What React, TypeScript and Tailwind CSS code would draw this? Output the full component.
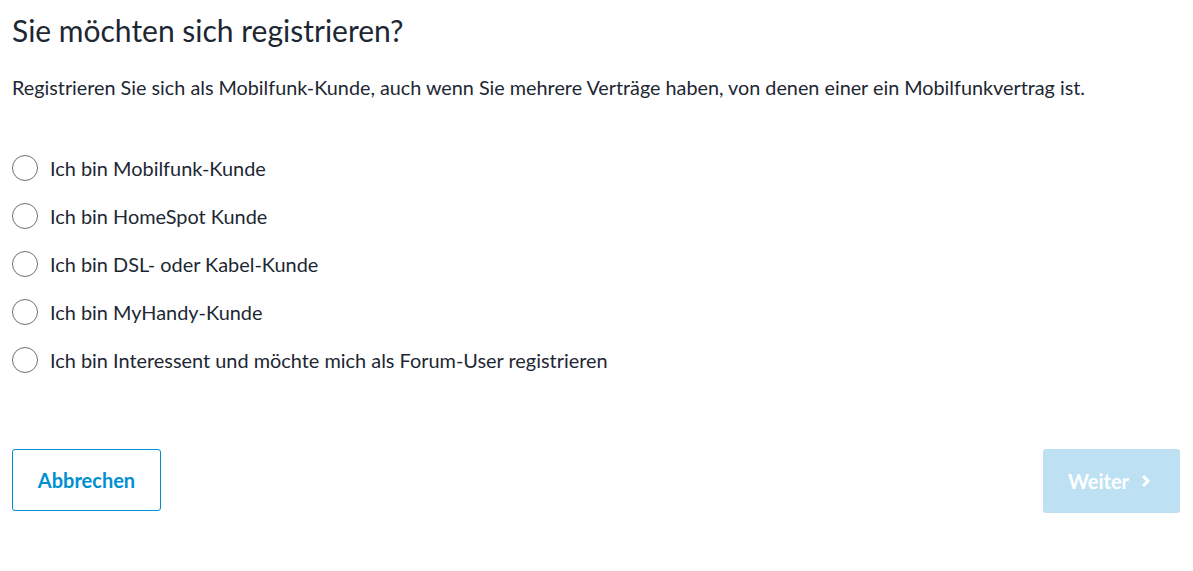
export default function App() {
  const options = [
    "Ich bin Mobilfunk-Kunde",
    "Ich bin HomeSpot Kunde",
    "Ich bin DSL- oder Kabel-Kunde",
    "Ich bin MyHandy-Kunde",
    "Ich bin Interessent und möchte mich als Forum-User registrieren",
  ];
  return (
    <div className="w-[1193px] h-[571px] bg-white text-[#1d2733] px-3 font-['Lato',sans-serif]">
      <h1 className="pt-[12px] text-[30px] leading-[36px]">Sie möchten sich registrieren?</h1>
      <p className="mt-[26px] text-[19.8px] leading-[26px]">
        Registrieren Sie sich als Mobilfunk-Kunde, auch wenn Sie mehrere Verträge haben, von denen einer ein Mobilfunkvertrag ist.
      </p>
      <div className="mt-[55px] flex flex-col gap-[22px]">
        {options.map((o) => (
          <label key={o} className="flex items-center gap-3 text-[19.9px] leading-[26px]">
            <span className="w-[26px] h-[26px] rounded-full border border-[#6b6f73]" />
            {o}
          </label>
        ))}
      </div>
      <div className="mt-[76px] flex justify-between pr-[1px]">
        <button className="w-[149px] h-[62px] rounded-[3px] border border-[#0090d0] text-[#0090d0] font-bold text-[20px]">
          Abbrechen
        </button>
        <button className="w-[137px] h-[64px] rounded-[3px] bg-[#bde1f3] text-white font-bold text-[20px] flex items-center justify-center gap-[12px] pr-[4px]">
          Weiter
          <svg width="10" height="16" viewBox="0 0 10 16" fill="none">
            <path d="M2 3l5 5-5 5" stroke="white" strokeWidth="3" />
          </svg>
        </button>
      </div>
    </div>
  );
}
